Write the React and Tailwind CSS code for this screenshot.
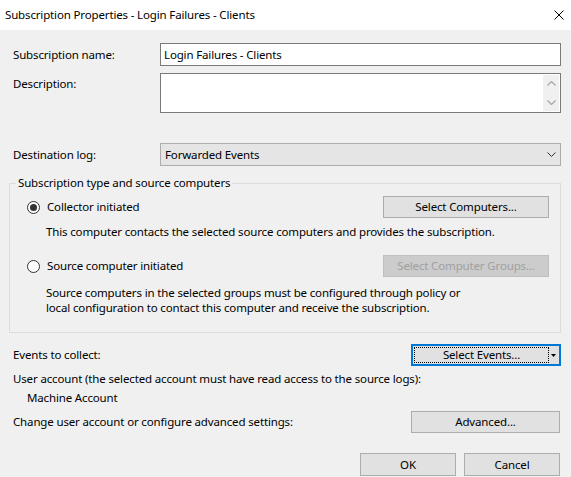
import React from "react";

function Radio({ checked }) {
  return (
    <span className="w-[13px] h-[13px] rounded-full border border-[#333333] bg-white flex items-center justify-center shrink-0">
      {checked && <span className="w-[7px] h-[7px] rounded-full bg-[#333333]" />}
    </span>
  );
}

function Btn({ children, className = "", disabled = false }) {
  return (
    <div
      className={
        "h-[22px] border flex items-center justify-center " +
        (disabled
          ? "bg-[#cccccc] border-[#bfbfbf] text-[#a0a0a0] "
          : "bg-[#e1e1e1] border-[#adadad] text-black ") +
        className
      }
    >
      {children}
    </div>
  );
}

export default function App() {
  return (
    <div className="w-[571px] h-[477px] overflow-hidden bg-[#f0f0f0] text-[11.5px] tracking-[-0.15px] leading-[16px] text-black font-['Noto_Sans',sans-serif]">
      {/* Title bar */}
      <div className="h-[30px] bg-white flex items-center justify-between pl-[5px] pr-[7px]">
        <span>Subscription Properties - Login Failures - Clients</span>
        <svg width="10" height="10" viewBox="0 0 10 10" className="block">
          <path d="M0.5 0.5 L9.5 9.5 M9.5 0.5 L0.5 9.5" stroke="#000" strokeWidth="1" fill="none" />
        </svg>
      </div>

      <div className="pl-[13px] pr-[10px]">
        {/* Subscription name */}
        <div className="mt-[13px] flex items-center">
          <div className="w-[147px] shrink-0">Subscription name:</div>
          <div className="flex-1 h-[23px] border border-[#7a7a7a] bg-white pl-[3px] flex items-center">
            Login Failures - Clients
          </div>
        </div>

        {/* Description */}
        <div className="mt-[7px] flex items-start">
          <div className="w-[147px] shrink-0 pt-[3px]">Description:</div>
          <div className="flex-1 h-[40px] border border-[#7a7a7a] bg-white flex justify-end p-[1px]">
            <div className="w-[16px] bg-[#f0f0f0] flex flex-col items-center justify-between py-[6px]">
              <svg width="9" height="5" viewBox="0 0 9 5" className="block">
                <polyline points="0.5,4.5 4.5,0.5 8.5,4.5" stroke="#a6a6a6" strokeWidth="1.2" fill="none" />
              </svg>
              <svg width="9" height="5" viewBox="0 0 9 5" className="block">
                <polyline points="0.5,0.5 4.5,4.5 8.5,0.5" stroke="#a6a6a6" strokeWidth="1.2" fill="none" />
              </svg>
            </div>
          </div>
        </div>

        {/* Destination log */}
        <div className="mt-[30px] flex items-center">
          <div className="w-[147px] shrink-0">Destination log:</div>
          <div className="flex-1 h-[23px] border border-[#adadad] bg-[#e5e5e5] pl-[4px] pr-[4px] flex items-center justify-between">
            <span>Forwarded Events</span>
            <svg width="9" height="5" viewBox="0 0 9 5" className="block">
              <polyline points="0.5,0.5 4.5,4.5 8.5,0.5" stroke="#333" strokeWidth="1" fill="none" />
            </svg>
          </div>
        </div>

        {/* Group box */}
        <fieldset className="mt-[9px] -ml-[4px] border border-[#dcdcdc]">
          <legend className="ml-[6px] px-[2px]">Subscription type and source computers</legend>
          <div className="pl-[17px] pr-[11px] pb-[17px]">
            <div className="mt-[5px] h-[22px] flex items-center justify-between">
              <div className="flex items-center">
                <Radio checked />
                <span className="ml-[7px]">Collector initiated</span>
              </div>
              <Btn className="w-[166px]">Select Computers...</Btn>
            </div>
            <div className="mt-[6px] pl-[19px] leading-[15px]">
              This computer contacts the selected source computers and provides the subscription.
            </div>
            <div className="mt-[16px] h-[22px] flex items-center justify-between">
              <div className="flex items-center">
                <Radio />
                <span className="ml-[7px]">Source computer initiated</span>
              </div>
              <Btn className="w-[166px]" disabled>
                Select Computer Groups...
              </Btn>
            </div>
            <div className="mt-[8px] pl-[19px] flex flex-col gap-[0px]">
              <div className="h-[15px] leading-[15px]">Source computers in the selected groups must be configured through policy or</div>
              <div className="h-[15px] leading-[15px]">local configuration to contact this computer and receive the subscription.</div>
            </div>
          </div>
        </fieldset>

        {/* Events to collect */}
        <div className="mt-[11px] h-[22px] flex items-center justify-between">
          <span>Events to collect:</span>
          <div className="w-[150px] h-[22px] border-2 border-[#0078d7] bg-[#e1e1e1] flex p-[1px]">
            <div className="flex-1 border border-dotted border-black flex items-center justify-center">
              Select Events...
            </div>
            <div className="w-[9px] flex items-center justify-center">
              <svg width="5" height="3" viewBox="0 0 5 3" className="block">
                <polygon points="0,0 5,0 2.5,3" fill="#000" />
              </svg>
            </div>
          </div>
        </div>

        <div className="mt-[5px]">User account (the selected account must have read access to the source logs):</div>
        <div className="mt-[3px] pl-[14px]">Machine Account</div>

        <div className="mt-[5px] h-[22px] flex items-center justify-between">
          <span>Change user account or configure advanced settings:</span>
          <Btn className="w-[149px] mr-[1px]">Advanced...</Btn>
        </div>

        <div className="mt-[20px] flex justify-end gap-[8px] pr-[1px]">
          <Btn className="w-[96px] h-[23px]">OK</Btn>
          <Btn className="w-[96px] h-[23px]">Cancel</Btn>
        </div>
      </div>
    </div>
  );
}
